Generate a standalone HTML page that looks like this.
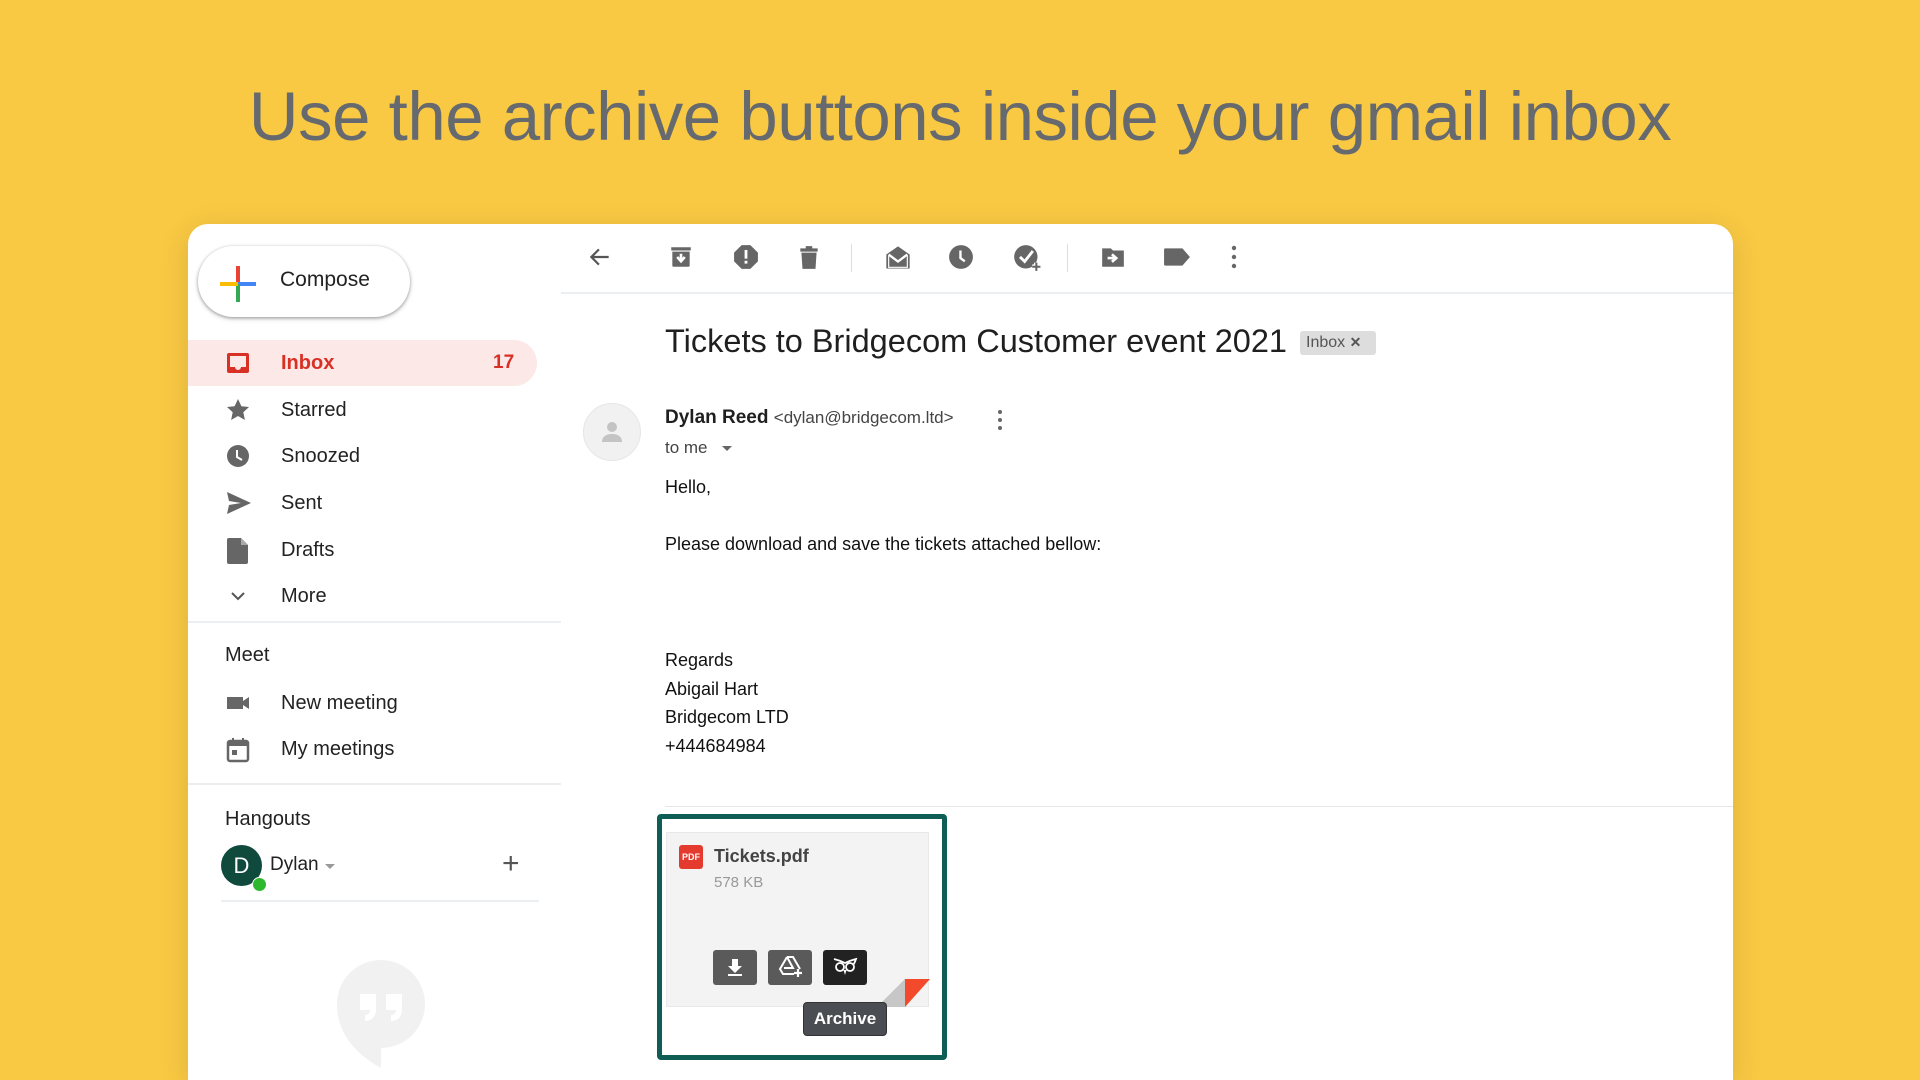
<!DOCTYPE html>
<html><head><meta charset="utf-8"><style>
*{margin:0;padding:0;box-sizing:border-box}
html,body{width:1920px;height:1080px;overflow:hidden}
body{background:#f9c943;font-family:"Liberation Sans",Arial,sans-serif;position:relative}
.h1{position:absolute;top:77px;left:0;width:1920px;text-align:center;font-size:69px;color:#666a6f;letter-spacing:-0.5px}
.card{position:absolute;left:188px;top:224px;width:1545px;height:856px;background:#fff;border-radius:20px 20px 0 0;box-shadow:0 6px 30px rgba(0,0,0,.12)}
.a{position:absolute}
.compose{left:10px;top:22px;width:212px;height:71px;border-radius:36px;box-shadow:0 1px 3px rgba(0,0,0,.35),0 2px 6px rgba(0,0,0,.12);background:#fff}
.compose span{position:absolute;left:82px;top:22px;font-size:21px;color:#222}
.nav{position:absolute;left:0;width:349px;height:46px;font-size:20px;color:#222}
.nav .t{position:absolute;left:93px;top:12px}
.nav svg{position:absolute;left:38px;top:11px}
.inbox{background:#fce8e6;border-radius:0 23px 23px 0;color:#d93025;font-weight:bold}
.div{position:absolute;height:2px;background:#eceff1}
.sh{position:absolute;left:37px;font-size:20px;color:#222}
.tb svg{position:absolute;top:20px}
.body{position:absolute;left:477px;font-size:18px;color:#111}
</style></head><body>
<div class="h1">Use the archive buttons inside your gmail inbox</div>
<div class="card">
 <div class="a compose">
  <svg class="a" style="left:22px;top:20px" width="36" height="36" viewBox="0 0 36 36"><rect x="16" y="0" width="4" height="18" fill="#ea4335"/><rect x="18" y="16" width="18" height="4" fill="#4285f4"/><rect x="16" y="18" width="4" height="18" fill="#34a853"/><rect x="0" y="16" width="18" height="4" fill="#fbbc04"/></svg>
  <span>Compose</span></div>
 <div class="nav inbox" style="top:116px"><svg width="24" height="24" viewBox="0 0 24 24"><path d="M3 2h18a2 2 0 0 1 2 2v16a2 2 0 0 1-2 2H3a2 2 0 0 1-2-2V4a2 2 0 0 1 2-2zm1 3v11h5a3 3 0 0 0 6 0h5V5z" fill="#d93025"/></svg><span class="t">Inbox</span><span class="a" style="left:305px;top:12px;font-size:19px">17</span></div>
 <div class="nav" style="top:163px"><svg width="24" height="24" viewBox="0 0 24 24"><path d="M12 1l3.4 7.2 7.6.8-5.7 5.2 1.6 7.8L12 18l-6.9 4 1.6-7.8L1 9l7.6-.8z" fill="#666"/></svg><span class="t">Starred</span></div>
 <div class="nav" style="top:209px"><svg width="24" height="24" viewBox="0 0 24 24"><circle cx="12" cy="12" r="11" fill="#666"/><path d="M11 6v7l5 3" stroke="#fff" stroke-width="2" fill="none"/></svg><span class="t">Snoozed</span></div>
 <div class="nav" style="top:256px"><svg width="26" height="24" viewBox="0 0 26 24"><path d="M1 1l24 11L1 23l2-9 12-2-12-2z" fill="#666"/></svg><span class="t">Sent</span></div>
 <div class="nav" style="top:303px"><svg width="24" height="26" viewBox="0 0 24 26"><path d="M3 0h12l7 7v17a2 2 0 0 1-2 2H3a2 2 0 0 1-2-2V2a2 2 0 0 1 2-2z" fill="#666"/><path d="M15 0v7h7" fill="#aaa"/></svg><span class="t">Drafts</span></div>
 <div class="nav" style="top:349px"><svg width="24" height="24" viewBox="0 0 24 24"><path d="M6 9l6 6 6-6" stroke="#555" stroke-width="2" fill="none"/></svg><span class="t">More</span></div>
 <div class="div" style="left:0;top:397px;width:373px"></div>
 <div class="sh" style="top:420px">Meet</div>
 <div class="nav" style="top:456px"><svg width="24" height="24" viewBox="0 0 24 24"><path d="M1 6h16v12H1zM17 10l6-4v12l-6-4z" fill="#666"/></svg><span class="t">New meeting</span></div>
 <div class="nav" style="top:502px"><svg width="24" height="26" viewBox="0 0 24 26"><rect x="2" y="4" width="20" height="20" rx="2" fill="none" stroke="#666" stroke-width="2.5"/><rect x="2" y="4" width="20" height="5" fill="#666"/><rect x="6" y="13" width="5" height="5" fill="#666"/><rect x="6" y="1" width="2" height="4" fill="#666"/><rect x="16" y="1" width="2" height="4" fill="#666"/></svg><span class="t">My meetings</span></div>
 <div class="div" style="left:0;top:559px;width:373px"></div>
 <div class="sh" style="top:584px">Hangouts</div>
 <div class="a" style="left:33px;top:621px;width:41px;height:41px;border-radius:50%;background:#0f4a3c;color:#fff;font-size:22px;text-align:center;line-height:41px">D</div>
 <div class="a" style="left:64px;top:653px;width:15px;height:15px;border-radius:50%;background:#2eb82e;border:1px solid #fff"></div>
 <div class="a" style="left:82px;top:630px;font-size:19px;color:#222">Dylan</div>
 <div class="a" style="left:137px;top:640px;width:0;height:0;border-left:5px solid transparent;border-right:5px solid transparent;border-top:5px solid #999"></div>
 <div class="a" style="left:314px;top:623px;font-size:30px;color:#555;font-weight:300">+</div>
 <div class="div" style="left:33px;top:676px;width:318px"></div>
 <svg class="a" style="left:148px;top:735px" width="90" height="110" viewBox="0 0 90 110"><path d="M45 1a44 44 0 0 1 0 88v20C20 95 1 75 1 45A44 44 0 0 1 45 1z" fill="#f1f1f1"/><path d="M24 35h16v16c0 7-5 11-11 11v-6c3 0 5-2 5-5h-10zM50 35h16v16c0 7-5 11-11 11v-6c3 0 5-2 5-5h-10z" fill="#fff"/></svg>

 <div class="div" style="left:373px;top:68px;width:1172px"></div>
 <div class="tb">
 <svg style="left:399px" width="26" height="26" viewBox="0 0 24 24"><path d="M20 12H5M11 5l-7 7 7 7" stroke="#555" stroke-width="2" fill="none"/></svg>
 <svg style="left:480px" width="26" height="26" viewBox="0 0 24 24"><path d="M3 3h18v3H3zM4 7h16v13a1 1 0 0 1-1 1H5a1 1 0 0 1-1-1z" fill="#666"/><path d="M12 9v6M8.5 12l3.5 4 3.5-4" stroke="#fff" stroke-width="2.4" fill="none"/></svg>
 <svg style="left:545px" width="26" height="26" viewBox="0 0 24 24"><path d="M8 1h8l7 7v8l-7 7H8l-7-7V8z" fill="#666"/><rect x="10.7" y="5.5" width="2.6" height="8" fill="#fff"/><rect x="10.7" y="15.5" width="2.6" height="2.6" fill="#fff"/></svg>
 <svg style="left:608px" width="26" height="26" viewBox="0 0 24 24"><path d="M4 4h16v3H4zM9 2h6v2H9zM5 8h14l-1 15H6z" fill="#666"/></svg>
 <div class="a" style="left:663px;top:20px;width:1px;height:28px;background:#ddd"></div>
 <svg style="left:696px" width="28" height="28" viewBox="0 0 24 24"><path d="M2 9l10-7 10 7v12H2z" fill="#666"/><path d="M4 9l8 6 8-6" stroke="#fff" stroke-width="2" fill="none"/><path d="M4 10v10h16V10" stroke="#fff" stroke-width="1" fill="none"/></svg>
 <svg style="left:760px" width="26" height="26" viewBox="0 0 24 24"><circle cx="12" cy="12" r="11" fill="#666"/><path d="M11.5 6v7l4 3" stroke="#fff" stroke-width="2.2" fill="none"/></svg>
 <svg style="left:825px" width="28" height="28" viewBox="0 0 24 24"><circle cx="11" cy="11" r="10" fill="#666"/><path d="M6 11l4 4 7-9" stroke="#fff" stroke-width="2.4" fill="none"/><path d="M20 16v7M16.5 19.5h7" stroke="#fff" stroke-width="4"/><path d="M20 16v7M16.5 19.5h7" stroke="#666" stroke-width="1.8"/></svg>
 <div class="a" style="left:879px;top:20px;width:1px;height:28px;background:#ddd"></div>
 <svg style="left:912px" width="26" height="26" viewBox="0 0 24 24"><path d="M2 4h8l2 2h10v15H2z" fill="#666"/><path d="M7 13h6M11 9.5l4 3.5-4 3.5" stroke="#fff" stroke-width="2.4" fill="none"/></svg>
 <svg style="left:975px" width="28" height="26" viewBox="0 0 26 24"><path d="M2 4h16l7 8-7 8H2a1 1 0 0 1-1-1V5a1 1 0 0 1 1-1z" fill="#666"/></svg>
 <svg style="left:1042px" width="8" height="26" viewBox="0 0 8 26"><circle cx="4" cy="4" r="2.2" fill="#666"/><circle cx="4" cy="13" r="2.2" fill="#666"/><circle cx="4" cy="22" r="2.2" fill="#666"/></svg>
 </div>

 <div class="a" style="left:477px;top:99px;font-size:32.5px;color:#1f1f1f">Tickets to Bridgecom Customer event 2021</div>
 <div class="a" style="left:1112px;top:107px;width:76px;height:24px;background:#ddd;border-radius:3px;font-size:16px;color:#555;padding:3px 0 0 6px">Inbox <b style="font-size:14px">✕</b></div>
 <div class="a" style="left:395px;top:179px;width:58px;height:58px;border-radius:50%;background:#f1f1f1;border:1px solid #e6e6e6"></div>
 <svg class="a" style="left:411px;top:195px" width="26" height="26" viewBox="0 0 26 26"><circle cx="13" cy="8" r="5" fill="#c4c4c4"/><path d="M3 23c0-6 5-8 10-8s10 2 10 8z" fill="#c4c4c4"/></svg>
 <div class="a" style="left:477px;top:183px;font-size:19px;color:#1f1f1f"><b>Dylan Reed</b> <span style="font-size:17px;color:#444">&lt;dylan@bridgecom.ltd&gt;</span></div>
 <svg class="a" style="left:808px;top:184px" width="8" height="24" viewBox="0 0 8 24"><circle cx="4" cy="4" r="2" fill="#666"/><circle cx="4" cy="12" r="2" fill="#666"/><circle cx="4" cy="20" r="2" fill="#666"/></svg>
 <div class="a" style="left:477px;top:214px;font-size:17px;color:#444">to me</div>
 <div class="a" style="left:534px;top:222px;width:0;height:0;border-left:5px solid transparent;border-right:5px solid transparent;border-top:5px solid #666"></div>
 <div class="body" style="top:253px">Hello,</div>
 <div class="body" style="top:310px">Please download and save the tickets attached bellow:</div>
 <div class="body" style="top:422px;line-height:28.5px">Regards<br>Abigail Hart<br>Bridgecom LTD<br>+444684984</div>
 <div class="div" style="left:477px;top:582px;width:1068px;height:1px;background:#e6e6e6"></div>

 <div class="a" style="left:469px;top:590px;width:290px;height:246px;border:5px solid #0e5e55;border-radius:4px"></div>
 <div class="a" style="left:478px;top:608px;width:263px;height:175px;background:#f3f3f3;border:1px solid #e8e8e8"></div>
 <div class="a" style="left:491px;top:621px;width:24px;height:24px;background:#e53b2f;border-radius:3px;color:#fff;font-size:9px;font-weight:bold;text-align:center;line-height:24px">PDF</div>
 <div class="a" style="left:526px;top:622px;font-size:18px;font-weight:bold;color:#444">Tickets.pdf</div>
 <div class="a" style="left:526px;top:650px;font-size:15px;color:#999">578 KB</div>
 <div class="a" style="left:525px;top:726px;width:44px;height:35px;background:#5a5a5a;border-radius:3px"></div>
 <svg class="a" style="left:537px;top:733px" width="20" height="20" viewBox="0 0 20 20"><path d="M7 2h6v7h4l-7 7-7-7h4z" fill="#fff"/><rect x="3" y="17" width="14" height="2" fill="#fff"/></svg>
 <div class="a" style="left:580px;top:726px;width:44px;height:35px;background:#5a5a5a;border-radius:3px"></div>
 <svg class="a" style="left:590px;top:731px" width="26" height="24" viewBox="0 0 26 24"><path d="M9 2h6l7 12M9 2L2 14l3 5h11M9 2l6 11H6" stroke="#fff" stroke-width="2" fill="none"/><path d="M20 14v8M16 18h8" stroke="#fff" stroke-width="2.2"/></svg>
 <div class="a" style="left:635px;top:726px;width:44px;height:35px;background:#222;border-radius:3px"></div>
 <svg class="a" style="left:644px;top:732px" width="26" height="22" viewBox="0 0 26 22"><path d="M2 3c4 1 7 2 11 4 4-2 7-3 11-4-1 3-2 5-3 6" stroke="#fff" stroke-width="1.8" fill="none"/><circle cx="8" cy="11" r="4" stroke="#fff" stroke-width="1.8" fill="none"/><circle cx="18" cy="11" r="4" stroke="#fff" stroke-width="1.8" fill="none"/><path d="M11.5 14l1.5 5 1.5-5z" fill="#fff"/></svg>
 <svg class="a" style="left:689px;top:754px" width="53" height="30" viewBox="0 0 53 30"><path d="M0 29L28 1v28z" fill="#c7c7c7"/><path d="M28 1h25L28 29z" fill="#f24a2a"/></svg>
 <div class="a" style="left:615px;top:778px;width:84px;height:34px;background:#4a4d51;border-radius:4px;border:1px solid #333;color:#fff;font-size:17px;font-weight:bold;text-align:center;line-height:32px">Archive</div>
</div>
</body></html>
